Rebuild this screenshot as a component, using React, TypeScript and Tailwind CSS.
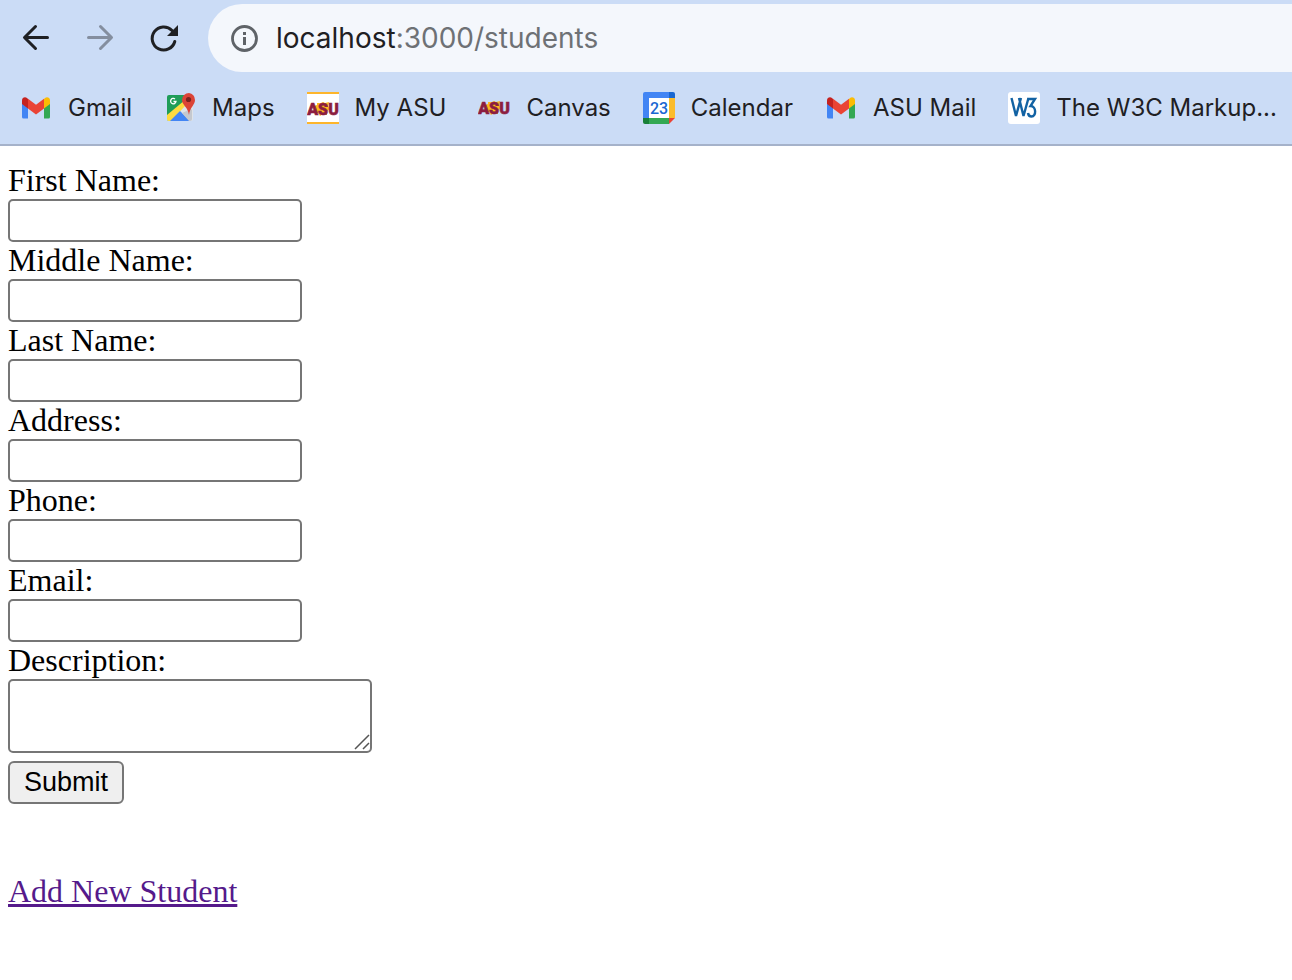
import type { ReactNode } from "react";

function GmailIcon() {
  return (
    <svg viewBox="0 0 32 32" className="size-8" aria-hidden="true">
      <path d="M2 9v16q0 1.500 1.500 1.500H8V13z" fill="#4285f4" />
      <path d="M24 13v13.500h4.500q1.500 0 1.500-1.500V9z" fill="#34a853" />
      <path d="M24 7v9.500l6-4.500V8.500c0-3-3-4-5-2.500z" fill="#fbbc04" />
      <path d="M2 8.500V12l6 4.500V7L7 6C5 4.500 2 5.500 2 8.500z" fill="#c5221f" />
      <path d="M8 6.800l8 6 8-6v9.700l-8 6-8-6z" fill="#ea4335" />
    </svg>
  );
}

function MapsIcon() {
  return (
    <svg viewBox="0 0 32 32" className="size-8" aria-hidden="true">
      <path d="M5 3h22v26H5q-2 0-2-2V5q0-2 2-2z" fill="#1f9d58" />
      <path d="M3 24L24 7l5 3v17q0 2-2 2H5q-2 0-2-2z" fill="#dfe3e8" />
      <path d="M3 23L21 8l1 5L7 29H5q-2 0-2-2z" fill="#fddb3f" />
      <path d="M6 29l10-10 10 10z" fill="#4285f4" />
      <path d="M27 17l1 1v9q0 2-2 2h-1l-7-8z" fill="#c4c8cf" />
      <path d="M25 1a7 7 0 0 0-7 7c0 5 6 7 7 15 1-8 6-10 6-15a7 7 0 0 0-6-7z" fill="#db4437" />
      <circle cx="24.500" cy="7.500" r="2.600" fill="#7b231e" />
      <path d="M11 7a2.700 2.700 0 1 0 1 2.500H9.500" fill="none" stroke="#fff" strokeWidth="1.300" />
    </svg>
  );
}

function AsuMark() {
  return (
    <>
      <path d="M10 10l4 0 2-1 2 1 4-1-1 4 2 3-3 2 0 4-4-1-3 2-2-3-4 0 2-4-2-3 3-1z" fill="#ffb81c" />
      <text
        x="16"
        y="22"
        textAnchor="middle"
        fontSize="16"
        fontWeight="900"
        fill="#8c1d40"
        stroke="#8c1d40"
        strokeWidth="0.600"
        className="font-['Roboto',sans-serif]"
      >
        ASU
      </text>
    </>
  );
}

function MyAsuIcon() {
  return (
    <svg viewBox="0 0 32 32" className="size-8" aria-hidden="true">
      <path d="M0 0h32v32H0z" fill="#fff" />
      <path d="M0 0h32v2H0zM0 30h32v2H0z" fill="#fdb52b" />
      <g transform="translate(0 1)">
        <AsuMark />
      </g>
    </svg>
  );
}

function CanvasIcon() {
  return (
    <svg viewBox="0 0 32 32" className="size-8" aria-hidden="true">
      <AsuMark />
    </svg>
  );
}

function CalendarIcon() {
  return (
    <svg viewBox="0 0 32 32" className="size-8" aria-hidden="true">
      <path d="M6 6h20v20H6z" fill="#fff" />
      <path d="M0 2q0-2 2-2h24v6H6v20H0z" fill="#4285f4" />
      <path d="M26 0h4q2 0 2 2v4h-6z" fill="#1967d2" />
      <path d="M26 6h6v20h-6z" fill="#fbbc2c" />
      <path d="M6 26h20v6H6z" fill="#34a853" />
      <path d="M0 26h6v6H2q-2 0-2-2z" fill="#188038" />
      <path d="M26 26h6l-6 6z" fill="#ea4335" />
      <text x="16" y="22" textAnchor="middle" fontSize="16" fontWeight="500" fill="#1a67d2" className="font-['Roboto',sans-serif]">
        23
      </text>
    </svg>
  );
}

function W3Icon() {
  return (
    <svg viewBox="0 0 32 32" className="size-8" aria-hidden="true">
      <rect width="32" height="32" rx="3" fill="#fff" />
      <path d="M3.500 6l4.500 18 5-18M11 6l4.500 18 5-18" fill="none" stroke="#1262a3" strokeWidth="2.400" strokeLinejoin="bevel" />
      <path d="M19.500 7h7.500l-4.500 7c6 0 6 10.500 1 10.500q-3 0-3.500-3.500" fill="none" stroke="#1262a3" strokeWidth="2.400" />
    </svg>
  );
}

const bookmarks: { label: string; icon: ReactNode }[] = [
  { label: "Gmail", icon: <GmailIcon /> },
  { label: "Maps", icon: <MapsIcon /> },
  { label: "My ASU", icon: <MyAsuIcon /> },
  { label: "Canvas", icon: <CanvasIcon /> },
  { label: "Calendar", icon: <CalendarIcon /> },
  { label: "ASU Mail", icon: <GmailIcon /> },
  { label: "The W3C Markup...", icon: <W3Icon /> },
];

const fields = [
  { id: "first-name", label: "First Name:" },
  { id: "middle-name", label: "Middle Name:" },
  { id: "last-name", label: "Last Name:" },
  { id: "address", label: "Address:" },
  { id: "phone", label: "Phone:" },
  { id: "email", label: "Email:" },
];

function Toolbar() {
  return (
    <div className="flex h-[68px] items-center">
      <div className="flex shrink-0 items-center gap-8 pr-7 pl-5">
        <button type="button" aria-label="Back" className="size-8">
          <svg viewBox="0 0 32 32" className="size-8" fill="none" stroke="#1f2023" strokeWidth="3" strokeLinecap="round" strokeLinejoin="round">
            <path d="M27.500 15.500H5M15.500 4.500l-11 11 11 11" />
          </svg>
        </button>
        <button type="button" aria-label="Forward" className="size-8">
          <svg viewBox="0 0 32 32" className="size-8" fill="none" stroke="#848e9f" strokeWidth="3" strokeLinecap="round" strokeLinejoin="round">
            <path d="M4.500 15.500H27M16.500 4.500l11 11-11 11" />
          </svg>
        </button>
        <button type="button" aria-label="Reload" className="size-8">
          <svg viewBox="0 0 32 32" className="size-8">
            <path d="M24 8.500A11.500 11.500 0 1 0 26.800 19.500" fill="none" stroke="#1f2023" strokeWidth="3" strokeLinecap="round" />
            <path d="M30 3v11H19z" fill="#1f2023" />
          </svg>
        </button>
      </div>
      <div className="flex h-[68px] min-w-0 flex-1 items-center gap-4 rounded-l-full bg-[#f4f7fc] pl-5">
        <button type="button" aria-label="View site information" className="size-8 shrink-0">
          <svg viewBox="0 0 32 32" className="size-8">
            <circle cx="16.500" cy="16.500" r="12" fill="none" stroke="#5f6368" strokeWidth="2.800" />
            <path d="M15 10h3v3h-3zM15 15h3v8h-3z" fill="#5f6368" />
          </svg>
        </button>
        <div className="truncate text-[28px] leading-9 text-[#6e7175]">
          <span className="text-[#1f2023]">localhost</span>:3000/students
        </div>
      </div>
    </div>
  );
}

export default function App() {
  return (
    <div className="min-h-screen bg-white">
      <header className="overflow-hidden border-b-2 border-[#a5b2ca] bg-[#cbdcf6] pt-1 font-['Inter','Liberation_Sans',sans-serif] text-[#1f2023]">
        <Toolbar />
        <nav aria-label="Bookmarks" className="flex h-[72px] items-center gap-8 pl-5">
          {bookmarks.map(({ label, icon }) => (
            <a key={label} href="#" className="flex shrink-0 items-center gap-4 text-2xl">
              {icon}
              {label}
            </a>
          ))}
        </nav>
      </header>
      <main className="px-2 py-4 font-['Liberation_Serif',serif] text-[32px] leading-[37px] text-black">
        <form onSubmit={(event) => event.preventDefault()} className="flex flex-col items-start">
          {fields.map(({ id, label }) => (
            <div key={id} className="flex flex-col items-start">
              <label htmlFor={id}>{label}</label>
              <input
                id={id}
                type="text"
                className="h-[43px] w-[294px] rounded-[5px] border-2 border-[#767676] bg-white px-1 font-['Liberation_Sans',sans-serif] text-[27px]"
              />
            </div>
          ))}
          <label htmlFor="description">Description:</label>
          <div className="relative flex">
            <textarea
              id="description"
              className="h-[74px] w-[364px] resize-none rounded-[5px] border-2 border-[#767676] bg-white p-1 font-mono text-[27px] leading-8"
            />
            <svg viewBox="0 0 16 16" className="pointer-events-none absolute right-0.5 bottom-[3px] size-4" fill="none" stroke="#555" strokeWidth="1.500" aria-hidden="true">
              <path d="M1 15L15 1M9 15l6-6" />
            </svg>
          </div>
          <button
            type="submit"
            className="mt-2 h-[43px] rounded-md border-2 border-[#767676] bg-[#efefef] px-[14px] pb-0.5 font-['Liberation_Sans',sans-serif] text-[27px] leading-8"
          >
            Submit
          </button>
        </form>
        <a href="#" className="mt-[69px] inline-block text-[#551a8b] underline decoration-[3px]">
          Add New Student
        </a>
      </main>
    </div>
  );
}
